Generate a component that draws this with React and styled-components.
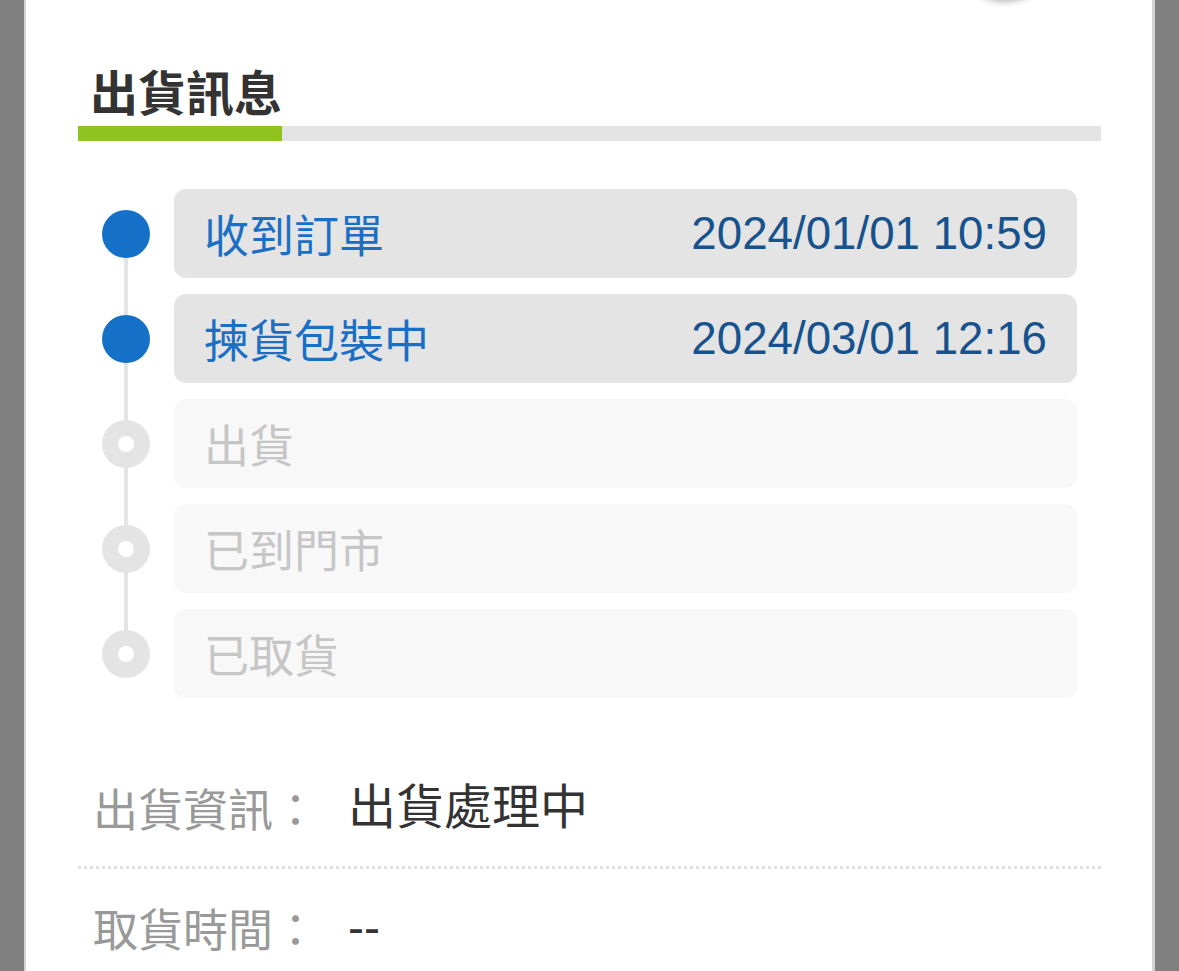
import React from 'react';
import styled, { createGlobalStyle } from 'styled-components';

const GlobalStyle = createGlobalStyle`
  html, body {
    margin: 0;
    padding: 0;
    background: #808080;
    overflow: hidden;
  }
  body {
    font-family: "Noto Sans CJK TC", "Noto Sans", sans-serif;
  }
`;

const Page = styled.div`
  height: 971px;
  overflow: hidden;
  padding-left: 24px;
  padding-right: 24px;
`;

const Card = styled.div`
  position: relative;
  background: #ffffff;
  border-left: 2px solid #d6d3d3;
  border-right: 3px solid #d6d3d3;
  min-height: 1100px;
  padding: 66px 51px 0 52px;
`;

const TopButton = styled.div`
  position: absolute;
  top: -110px;
  left: 924px;
  width: 110px;
  height: 110px;
  border-radius: 50%;
  background: #ffffff;
  box-shadow: 0 2px 6px rgba(0, 0, 0, 0.28);
`;

const Title = styled.h2`
  margin: 0;
  padding: 0 12px;
  font-size: 48px;
  line-height: 48px;
  font-weight: 700;
  color: #333333;
`;

const Track = styled.div`
  margin-top: 12px;
  height: 15px;
  background: #e3e3e3;
`;

const TrackFill = styled.div`
  width: 204px;
  height: 100%;
  background: #8fc31f;
`;

const Steps = styled.ul`
  list-style: none;
  margin: 48px 0 0;
  padding: 0 24px 0 24px;
  display: flex;
  flex-direction: column;
  gap: 16px;
`;

const Step = styled.li`
  position: relative;
  display: flex;
  align-items: center;
  gap: 24px;

  &:not(:last-child)::before {
    content: '';
    position: absolute;
    left: 22px;
    top: 44px;
    width: 4px;
    height: 105px;
    background: #e4e4e4;
  }
`;

const Dot = styled.span`
  position: relative;
  z-index: 1;
  flex: none;
  width: 48px;
  height: 48px;
  border-radius: 50%;
  background: ${p => (p.$done ? '#1570c8' : '#e4e4e4')};
  display: flex;
  align-items: center;
  justify-content: center;

  &::after {
    content: '';
    display: ${p => (p.$done ? 'none' : 'block')};
    width: 16px;
    height: 16px;
    border-radius: 50%;
    background: #ffffff;
  }
`;

const StepBox = styled.div`
  flex: 1;
  height: 89px;
  box-sizing: border-box;
  border-radius: 12px;
  padding: 0 30px 0 30px;
  display: flex;
  align-items: center;
  justify-content: space-between;
  background: ${p => (p.$done ? '#e4e4e4' : '#f8f8f8')};
`;

const StepName = styled.span`
  font-size: 45px;
  line-height: 1;
  color: ${p => (p.$done ? '#1a6fc4' : '#c6c6c6')};
`;

const StepTime = styled.span`
  font-family: "Liberation Sans", Arial, sans-serif;
  font-size: 45.7px;
  line-height: 1;
  color: #15528e;
`;

const Info = styled.div`
  margin-top: 51px;
`;

const InfoRow = styled.div`
  display: flex;
  align-items: center;
  height: 117px;
  padding-left: 15px;
  background-image: ${p =>
    p.$divider
      ? 'linear-gradient(to right, #e2e2e2 50%, transparent 50%)'
      : 'none'};
  background-size: 6px 3px;
  background-repeat: repeat-x;
  background-position: left bottom;
  padding-bottom: ${p => (p.$divider ? '3px' : '0')};
`;

const InfoLabel = styled.span`
  width: 255px;
  flex: none;
  font-size: 45px;
  line-height: 1;
  color: #999999;
`;

const InfoValue = styled.span`
  font-family: "Liberation Sans", "Noto Sans CJK TC", sans-serif;
  font-size: 48px;
  line-height: 1;
  color: #333333;
`;

const steps = [
  { name: '收到訂單', time: '2024/01/01 10:59', done: true },
  { name: '揀貨包裝中', time: '2024/03/01 12:16', done: true },
  { name: '出貨', time: '', done: false },
  { name: '已到門市', time: '', done: false },
  { name: '已取貨', time: '', done: false },
];

export default function App() {
  return (
    <>
      <GlobalStyle />
      <Page>
        <Card>
          <TopButton />
          <Title>出貨訊息</Title>
          <Track>
            <TrackFill />
          </Track>
          <Steps>
            {steps.map(s => (
              <Step key={s.name}>
                <Dot $done={s.done} />
                <StepBox $done={s.done}>
                  <StepName $done={s.done}>{s.name}</StepName>
                  {s.time && <StepTime>{s.time}</StepTime>}
                </StepBox>
              </Step>
            ))}
          </Steps>
          <Info>
            <InfoRow $divider>
              <InfoLabel>出貨資訊：</InfoLabel>
              <InfoValue>出貨處理中</InfoValue>
            </InfoRow>
            <InfoRow>
              <InfoLabel>取貨時間：</InfoLabel>
              <InfoValue>--</InfoValue>
            </InfoRow>
          </Info>
        </Card>
      </Page>
    </>
  );
}
